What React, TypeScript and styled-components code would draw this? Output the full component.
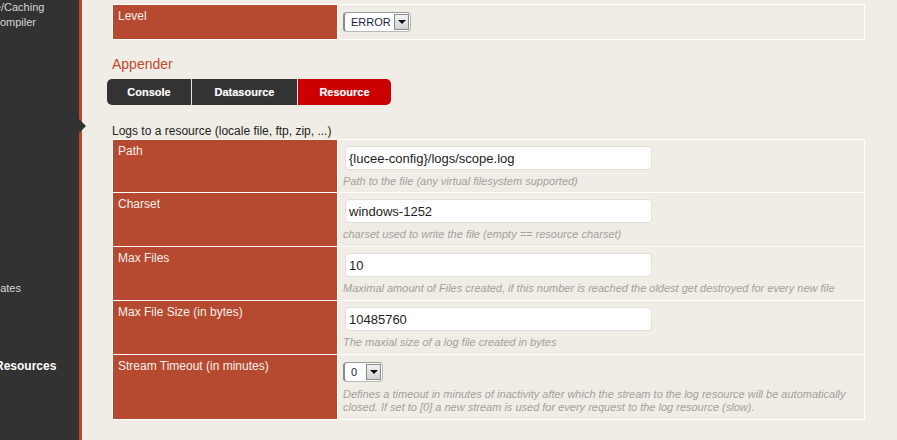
import React from "react";
import styled, { createGlobalStyle } from "styled-components";

const Global = createGlobalStyle`
  html, body { margin: 0; padding: 0; }
  body {
    width: 897px;
    height: 440px;
    overflow: hidden;
    background: #f0ede6;
    font-family: "Liberation Sans", Arial, sans-serif;
  }
  #root { height: 440px; }
`;

const ORANGE = "#b54a30";

const Page = styled.div`
  display: flex;
  height: 440px;
  position: relative;
`;

const Sidebar = styled.nav`
  width: 79px;
  flex: none;
  background: #323232;
  border-right: 3px solid ${ORANGE};
  overflow: hidden;
  display: flex;
  flex-direction: column;
`;

const MenuItem = styled.div<{ $top: number; $shift: number; $bold?: boolean }>`
  margin-top: ${(p) => p.$top}px;
  text-indent: ${(p) => p.$shift}px;
  white-space: nowrap;
  font-size: ${(p) => (p.$bold ? 12 : 11)}px;
  line-height: 15px;
  font-weight: ${(p) => (p.$bold ? 700 : 400)};
  color: ${(p) => (p.$bold ? "#ffffff" : "#d6d6d6")};
`;

const Pointer = styled.div`
  position: absolute;
  left: 79px;
  top: 119px;
  width: 0;
  height: 0;
  border-left: 7px solid #323232;
  border-top: 7.5px solid transparent;
  border-bottom: 7.5px solid transparent;
`;

const Content = styled.main`
  flex: 1;
  padding: 4px 32px 0 30px;
  display: flex;
  flex-direction: column;
`;

const FormTable = styled.div`
  display: grid;
  grid-template-columns: 224px 1fr;
  gap: 1px;
  padding: 1px;
  background: #ffffff;
  width: 751px;
`;

const Label = styled.div`
  background: ${ORANGE};
  color: #f6eeea;
  font-size: 12px;
  line-height: 14px;
  padding: 4px 5px;
`;

const Value = styled.div<{ $h: number }>`
  background: #f0ede6;
  height: ${(p) => p.$h}px;
  box-sizing: border-box;
  padding: 6px 5px 0 5px;
  display: flex;
  flex-direction: column;
  align-items: flex-start;
`;

const TextInput = styled.input`
  width: 307px;
  height: 24px;
  box-sizing: border-box;
  margin: 0 0 0 2px;
  border: 1px solid #e2ded8;
  border-radius: 4px;
  background: #ffffff;
  padding: 0 3px;
  font-family: "Liberation Sans", Arial, sans-serif;
  font-size: 13px;
  color: #1e1e1e;
  outline: none;
`;

const Help = styled.div<{ $mt: number }>`
  margin-top: ${(p) => p.$mt}px;
  font-size: 11px;
  line-height: 13px;
  font-style: italic;
  color: #a3a09b;
`;

const SelectBox = styled.div<{ $w: number }>`
  width: ${(p) => p.$w}px;
  height: 20px;
  box-sizing: border-box;
  display: flex;
  align-items: center;
  justify-content: space-between;
  background: #ffffff;
  border: 1px solid #b8b8b8;
  border-left: 2px solid #8a8a8a;
  border-top-color: #9a9a9a;
  border-radius: 4px;
  padding: 0 1px 0 6px;
  font-size: 11px;
  color: #1c1c48;
`;

const SelectArrow = styled.div`
  width: 15px;
  height: 16px;
  box-sizing: border-box;
  border: 1px solid #8c8c8c;
  background: linear-gradient(#f2f2f2, #d2d2d2);
  display: flex;
  align-items: center;
  justify-content: center;
  &::after {
    content: "";
    border-top: 4px solid #111;
    border-left: 4px solid transparent;
    border-right: 4px solid transparent;
  }
`;

const Heading = styled.h2`
  margin: 16px 0 0 0;
  font-size: 14px;
  line-height: 16px;
  font-weight: 400;
  color: #bf4a2e;
`;

const Tabs = styled.div`
  display: flex;
  margin: 7px 0 0 -5px;
  height: 26px;
`;

const Tab = styled.div<{ $w: number; $active?: boolean; $first?: boolean; $last?: boolean }>`
  width: ${(p) => p.$w}px;
  height: 26px;
  box-sizing: border-box;
  display: flex;
  align-items: center;
  justify-content: center;
  background: ${(p) => (p.$active ? "#cc0000" : "#333333")};
  color: #ffffff;
  font-size: 11px;
  font-weight: 700;
  text-shadow: 0 0 1px rgba(255, 255, 255, 0.4);
  border-right: ${(p) => (p.$last ? "none" : "1px solid #e8e4de")};
  border-radius: ${(p) => (p.$first ? "5px 0 0 5px" : p.$last ? "0 5px 5px 0" : "0")};
`;

const Intro = styled.div`
  margin-top: 19px;
  font-size: 12px;
  line-height: 14px;
  color: #222222;
  margin-bottom: 1px;
`;

type Field = {
  label: string;
  h: number;
  kind: "input" | "select";
  value: string;
  help: string;
};

const fields: Field[] = [
  {
    label: "Path",
    h: 52,
    kind: "input",
    value: "{lucee-config}/logs/scope.log",
    help: "Path to the file (any virtual filesystem supported)",
  },
  {
    label: "Charset",
    h: 53,
    kind: "input",
    value: "windows-1252",
    help: "charset used to write the file (empty == resource charset)",
  },
  {
    label: "Max Files",
    h: 53,
    kind: "input",
    value: "10",
    help: "Maximal amount of Files created, if this number is reached the oldest get destroyed for every new file",
  },
  {
    label: "Max File Size (in bytes)",
    h: 53,
    kind: "input",
    value: "10485760",
    help: "The maxial size of a log file created in bytes",
  },
  {
    label: "Stream Timeout (in minutes)",
    h: 64,
    kind: "select",
    value: "0",
    help: "Defines a timeout in minutes of inactivity after which the stream to the log resource will be automatically closed. If set to [0] a new stream is used for every request to the log resource (slow).",
  },
];

export default function App() {
  return (
    <>
      <Global />
      <Page>
        <Sidebar>
          <MenuItem $top={0} $shift={-62}>Performance/Caching</MenuItem>
          <MenuItem $top={0} $shift={-8}>Compiler</MenuItem>
          <MenuItem $top={251} $shift={-20}>Updates</MenuItem>
          <MenuItem $top={63} $shift={-5} $bold>Resources</MenuItem>
        </Sidebar>
        <Pointer />
        <Content>
          <FormTable>
            <Label>Level</Label>
            <Value $h={34} style={{ paddingTop: 7 }}>
              <SelectBox $w={68}>
                <span>ERROR</span>
                <SelectArrow />
              </SelectBox>
            </Value>
          </FormTable>
          <Heading>Appender</Heading>
          <Tabs>
            <Tab $w={85} $first>Console</Tab>
            <Tab $w={106}>Datasource</Tab>
            <Tab $w={93} $active $last>Resource</Tab>
          </Tabs>
          <Intro>Logs to a resource (locale file, ftp, zip, ...)</Intro>
          <FormTable>
            {fields.map((f) => (
              <React.Fragment key={f.label}>
                <Label>{f.label}</Label>
                <Value $h={f.h}>
                  {f.kind === "input" ? (
                    <TextInput defaultValue={f.value} readOnly />
                  ) : (
                    <SelectBox $w={40} style={{ marginTop: 1 }}>
                      <span>{f.value}</span>
                      <SelectArrow />
                    </SelectBox>
                  )}
                  <Help $mt={f.kind === "input" ? 5 : 6}>{f.help}</Help>
                </Value>
              </React.Fragment>
            ))}
          </FormTable>
        </Content>
      </Page>
    </>
  );
}
